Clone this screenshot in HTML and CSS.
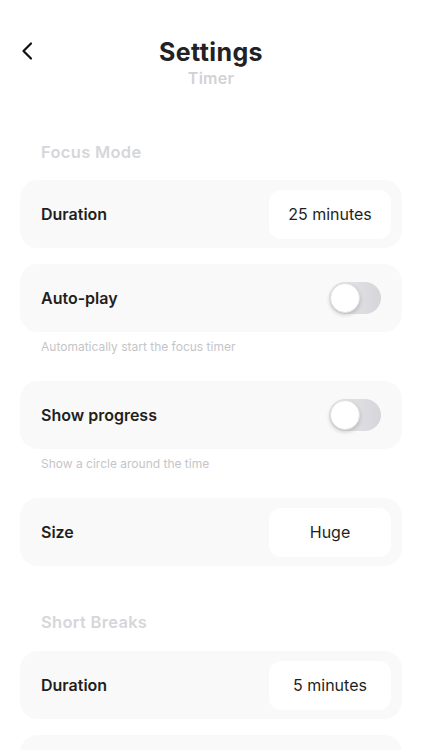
FILE: index.html
```html
<!DOCTYPE html>
<html>
<head>
<meta name="viewport" content="width=device-width, initial-scale=1">
<link rel="stylesheet" href="styles.css">
</head>
<body>

<header class="top">
  <a href="#" class="back">
    <svg width="14" height="20" viewBox="0 0 14 20"><polyline points="10,2.5 2.5,10 10,17.5" fill="none" stroke="#111" stroke-width="2.2" stroke-linecap="round" stroke-linejoin="round"/></svg>
  </a>
  <h1 class="title">Settings</h1>
  <div class="subtitle">Timer</div>
</header>

<main class="settings">

  <h2 class="group">Focus Mode</h2>

  <div class="card">
    <span class="label">Duration</span>
    <span class="value">25 minutes</span>
  </div>

  <div class="card card-toggle">
    <span class="label">Auto-play</span>
    <span class="switch"><span class="knob"></span></span>
  </div>
  <p class="hint">Automatically start the focus timer</p>

  <div class="card card-toggle">
    <span class="label">Show progress</span>
    <span class="switch"><span class="knob"></span></span>
  </div>
  <p class="hint">Show a circle around the time</p>

  <div class="card">
    <span class="label">Size</span>
    <span class="value">Huge</span>
  </div>

  <h2 class="group group-next">Short Breaks</h2>

  <div class="card">
    <span class="label">Duration</span>
    <span class="value">5 minutes</span>
  </div>

  <div class="card card-toggle"></div>

</main>

</body>
</html>
```

FILE: styles.css
```css
* {
  box-sizing: border-box;
}

html, body {
  margin: 0;
  padding: 0;
  background-color: #fff;
  font-family: Inter, "Noto Sans", sans-serif;
  color: #1c1c1e;
  overflow: hidden;
}

.top {
  position: relative;
  padding-top: 37px;
  text-align: center;
}

.back {
  position: absolute;
  left: 21px;
  top: 41px;
  display: block;
  width: 14px;
  height: 20px;
}

.title {
  margin: 0;
  font-size: 25px;
  line-height: 30px;
  font-weight: 700;
  letter-spacing: 0.4px;
  color: #222224;
}

.subtitle {
  margin-top: 1px;
  font-size: 16px;
  line-height: 20px;
  font-weight: 600;
  color: #d2d2d6;
  letter-spacing: 0.3px;
}

.settings {
  padding: 0 20px;
}

.group {
  margin: 54px 0 18px 21px;
  font-size: 16.5px;
  line-height: 20px;
  font-weight: 600;
  color: #d6d6da;
  letter-spacing: 0.3px;
}

.group-next {
  margin-top: 46px;
  margin-bottom: 19px;
}

.card {
  display: flex;
  align-items: center;
  justify-content: space-between;
  height: 68px;
  padding: 0 11px 0 21px;
  margin-bottom: 16px;
  background-color: #f9f9f9;
  border-radius: 18px;
}

.card-toggle {
  padding-right: 21px;
}

.label {
  font-size: 16px;
  font-weight: 600;
  color: #1f1f21;
}

.value {
  display: flex;
  align-items: center;
  justify-content: center;
  width: 122px;
  height: 49px;
  background-color: #fff;
  border-radius: 12px;
  font-size: 16px;
  color: #1f1f21;
}

.switch {
  position: relative;
  display: block;
  width: 52px;
  height: 32px;
  border-radius: 16px;
  background: linear-gradient(90deg, #e9e9ec, #d6d6da);
}

.knob {
  position: absolute;
  left: 1px;
  top: 1px;
  width: 30px;
  height: 30px;
  border-radius: 50%;
  background-color: #fff;
  border: 0.5px solid #e2e2e4;
  box-shadow: 0 2px 4px rgba(0, 0, 0, 0.18);
}

.hint {
  margin: -9px 0 26px 21px;
  font-size: 12px;
  line-height: 16px;
  color: #c5c5c9;
}
```
